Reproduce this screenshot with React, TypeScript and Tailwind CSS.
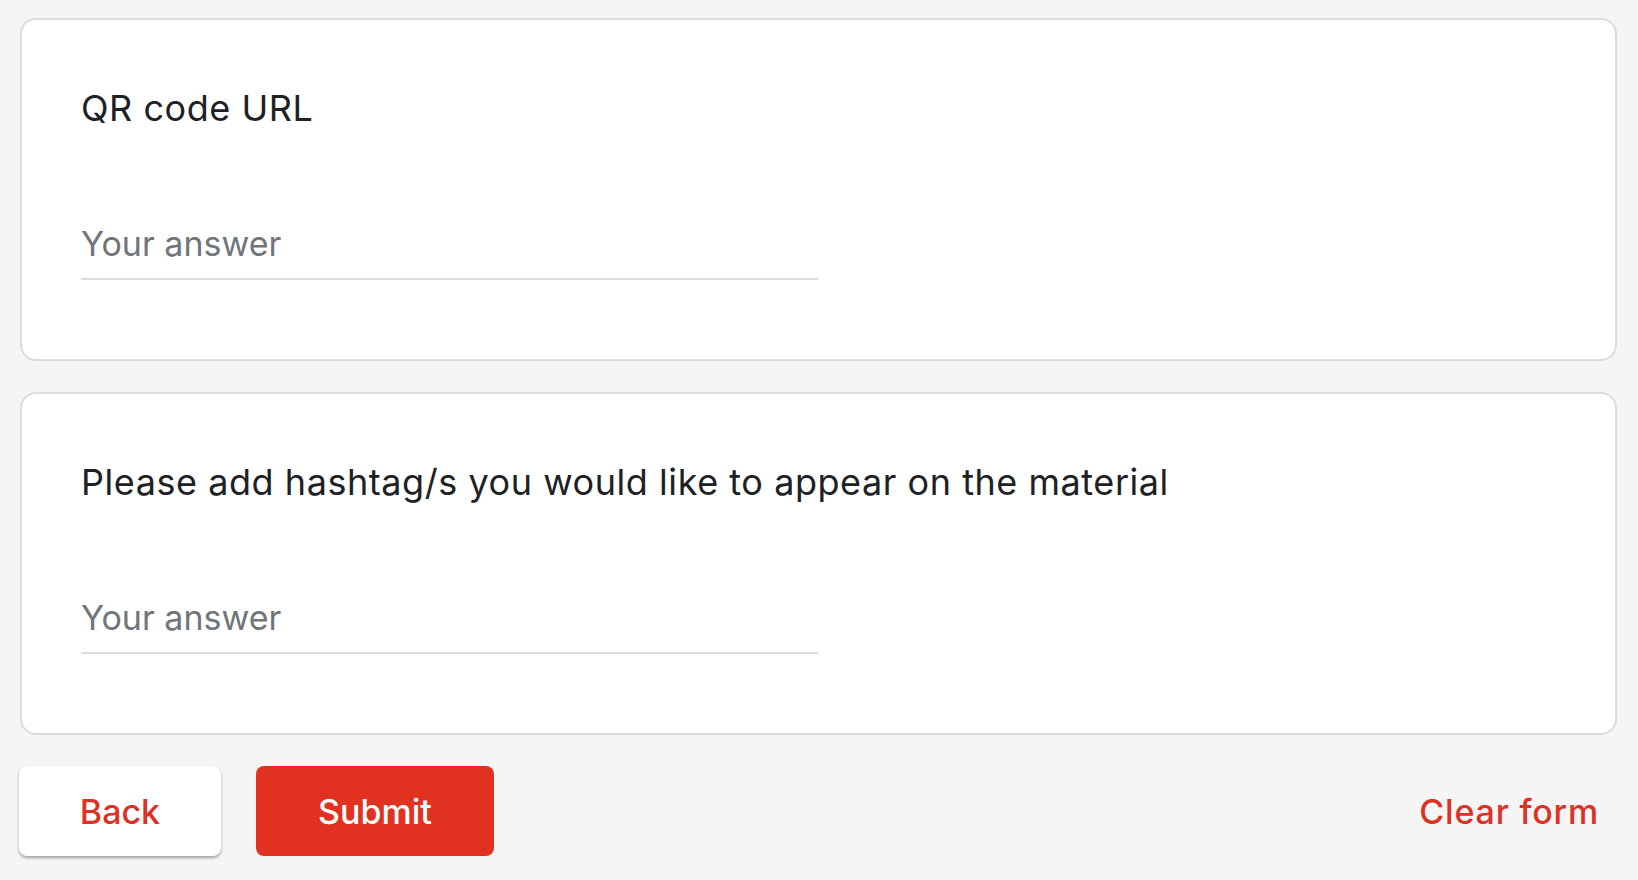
export default function App() {
  const questions = ['QR code URL', 'Please add hashtag/s you would like to appear on the material']

  return (
    <div
      className="min-h-screen bg-[#f5f5f5] pt-[18px] pl-[20px] pr-[21px]"
      style={{ fontFamily: 'Inter, "Open Sans", sans-serif' }}
    >
      <div className="flex flex-col gap-[31px]">
        {questions.map((q, i) => (
          <div
            key={i}
            className="h-[343px] rounded-[16px] border-2 border-[#dadce0] bg-white pt-[64px] pl-[59px]"
          >
            <div className="text-[36px] leading-[48px] tracking-[0.55px] text-[#202124]">{q}</div>
            <div className="mt-[88px] w-[737px] border-b-2 border-[#dadce0] pb-[10px]">
              <div className="text-[34px] leading-[48px] text-[#70757a]">Your answer</div>
            </div>
          </div>
        ))}
      </div>

      {/* Buttons */}
      <div className="mt-[31px] flex items-center">
        <button className="ml-[-1px] h-[90px] w-[202px] rounded-[8px] bg-white text-[34px] font-medium text-[#dc3125] shadow-[0_2px_3px_rgba(0,0,0,0.35)]">
          Back
        </button>
        <button className="ml-[35px] h-[90px] w-[238px] rounded-[8px] bg-[#e03121] text-[34px] font-medium text-white">
          Submit
        </button>
        <button className="ml-auto mr-[18px] text-[34px] font-medium tracking-[0.8px] text-[#dc3125]">
          Clear form
        </button>
      </div>
    </div>
  )
}
